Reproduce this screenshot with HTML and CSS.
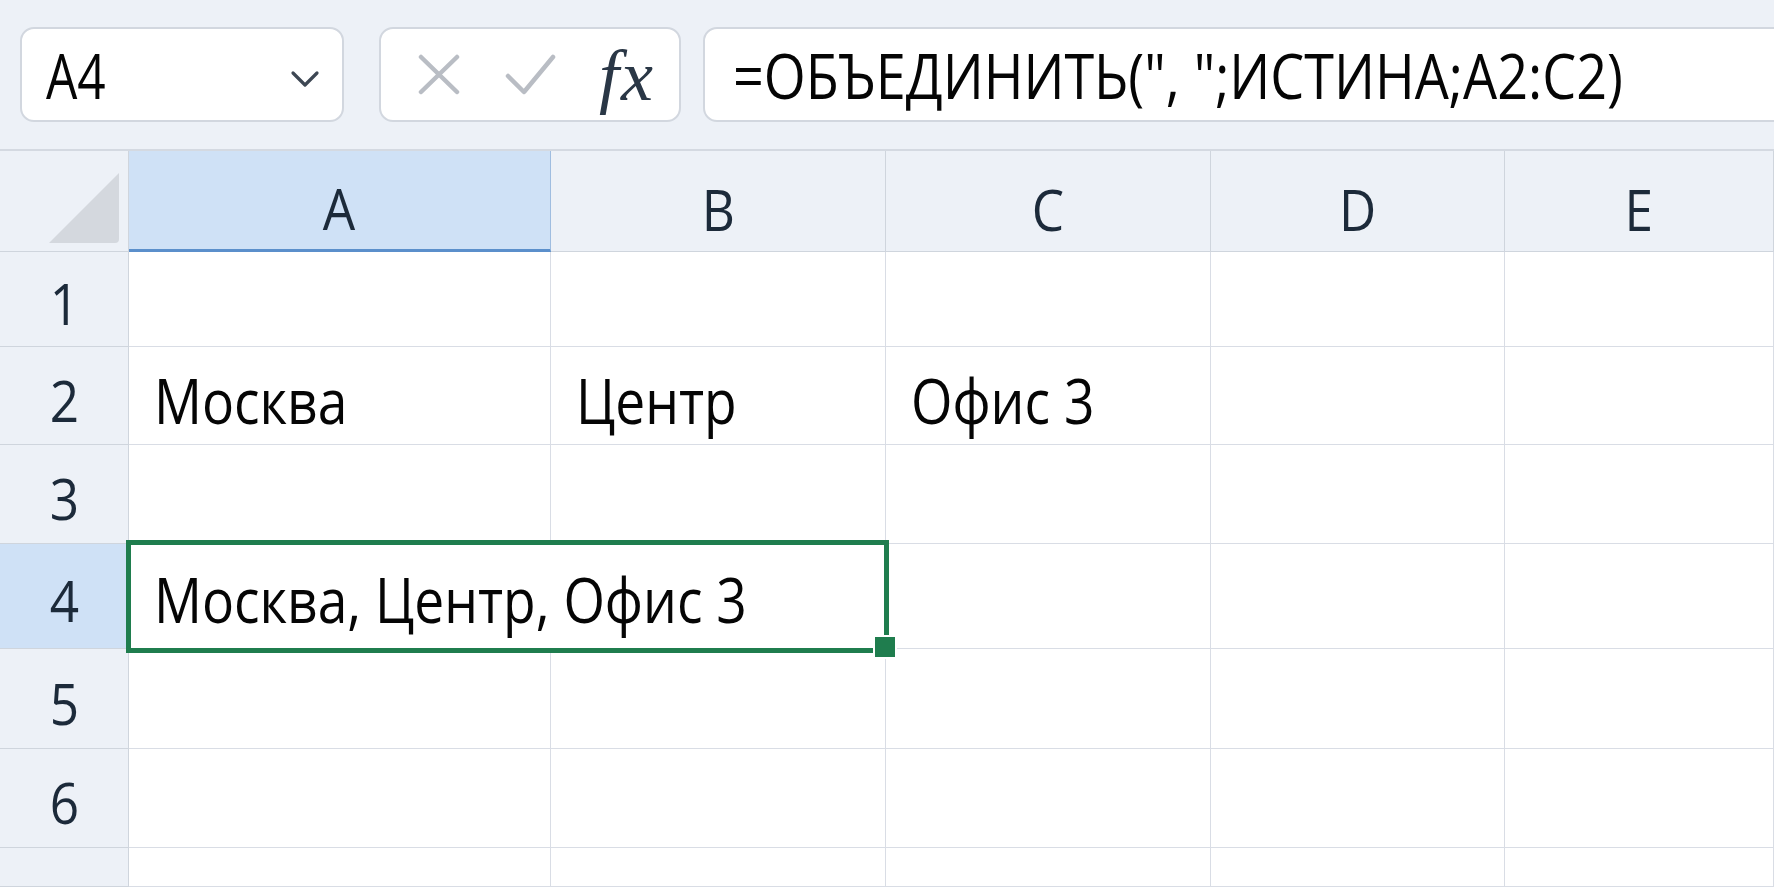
FILE: index.html
```html
<!DOCTYPE html>
<html lang="ru">
<head>
  <meta charset="UTF-8">
  <meta name="viewport" content="width=device-width, initial-scale=1.0">
  <title>Книга1</title>
  <link rel="stylesheet" href="styles.css">
</head>
<body>
  <div class="toolbar">
    <div class="name-box">
      <span class="narrow">A4</span>
      <svg class="chevron" width="30" height="18" viewBox="0 0 30 18">
        <polyline points="3,3 15,15 27,3" />
      </svg>
    </div>
    <div class="fx-box">
      <svg class="icon-cancel" width="42" height="41" viewBox="0 0 42 41">
        <line x1="3" y1="3" x2="39" y2="38" />
        <line x1="39" y1="3" x2="3" y2="38" />
      </svg>
      <svg class="icon-enter" width="51" height="41" viewBox="0 0 51 41">
        <polyline points="3,22 19,38 48,3" />
      </svg>
      <span class="fx">fx</span>
    </div>
    <div class="formula-bar"><span class="narrow">=ОБЪЕДИНИТЬ(", ";ИСТИНА;A2:C2)</span></div>
  </div>

  <div class="sheet">
    <div class="corner">
      <svg width="70" height="70" viewBox="0 0 70 70">
        <path d="M70 0 L70 66 Q70 70 66 70 L0 70 Z" />
      </svg>
    </div>
    <div class="col-head selected"><span class="narrow">A</span></div>
    <div class="col-head"><span class="narrow">B</span></div>
    <div class="col-head"><span class="narrow">C</span></div>
    <div class="col-head"><span class="narrow">D</span></div>
    <div class="col-head"><span class="narrow">E</span></div>

    <div class="row-head"><span class="narrow">1</span></div>
    <div class="cell"></div>
    <div class="cell"></div>
    <div class="cell"></div>
    <div class="cell"></div>
    <div class="cell"></div>

    <div class="row-head"><span class="narrow">2</span></div>
    <div class="cell"><span class="narrow">Москва</span></div>
    <div class="cell"><span class="narrow">Центр</span></div>
    <div class="cell"><span class="narrow">Офис 3</span></div>
    <div class="cell"></div>
    <div class="cell"></div>

    <div class="row-head"><span class="narrow">3</span></div>
    <div class="cell"></div>
    <div class="cell"></div>
    <div class="cell"></div>
    <div class="cell"></div>
    <div class="cell"></div>

    <div class="row-head selected"><span class="narrow">4</span></div>
    <div class="cell wide"><span class="narrow">Москва, Центр, Офис 3</span></div>
    <div class="cell"></div>
    <div class="cell"></div>
    <div class="cell"></div>

    <div class="row-head"><span class="narrow">5</span></div>
    <div class="cell"></div>
    <div class="cell"></div>
    <div class="cell"></div>
    <div class="cell"></div>
    <div class="cell"></div>

    <div class="row-head"><span class="narrow">6</span></div>
    <div class="cell"></div>
    <div class="cell"></div>
    <div class="cell"></div>
    <div class="cell"></div>
    <div class="cell"></div>

    <!-- last row is cut by the window, its number stays hidden -->
    <div class="row-head"></div>
    <div class="cell"></div>
    <div class="cell"></div>
    <div class="cell"></div>
    <div class="cell"></div>
    <div class="cell"></div>

    <!-- active cell frame + fill handle -->
    <div class="selection"></div>
    <div class="fill-handle"></div>
  </div>
</body>
</html>
```

FILE: styles.css
```css
* {
  box-sizing: border-box;
}
body {
  margin: 0;
  height: 887px;
  overflow: hidden;
  background: #fff;
  font-family: "Open Sans", "Noto Sans", sans-serif;
  color: #050505;
}

/* condensed look of the sheet font */
.narrow {
  display: inline-block;
  transform: scaleX(0.86);
  transform-origin: 0 50%;
}

/* formula bar */
.toolbar {
  height: 151px;
  background: #edf1f7;
  border-bottom: 2px solid #d4d9e1;
  display: flex;
  align-items: flex-start;
  padding: 27px 0 0 20px;
  white-space: nowrap;
}
.name-box,
.fx-box,
.formula-bar {
  height: 95px;
  background: #fff;
  border: 2px solid #d2d7df;
  border-radius: 14px;
  display: flex;
  align-items: center;
  flex-shrink: 0;
}
.name-box {
  width: 324px;
  padding: 0 22px 0 24px;
  justify-content: space-between;
  font-size: 62px;
}
.name-box .narrow {
  transform: scaleX(0.8);
}
.chevron {
  margin-top: 8px;
}
.chevron polyline {
  fill: none;
  stroke: #3d4753;
  stroke-width: 3.2;
  stroke-linecap: round;
  stroke-linejoin: round;
}
.fx-box {
  width: 302px;
  margin-left: 35px;
  padding-left: 37px;
}
.fx-box line,
.fx-box polyline {
  fill: none;
  stroke: #b9bdc4;
  stroke-width: 4.5;
  stroke-linecap: round;
  stroke-linejoin: round;
}
.icon-enter {
  margin-left: 45px;
}
.fx {
  margin-left: 43px;
  margin-top: 4px;
  font-family: "Liberation Serif", "DejaVu Serif", serif;
  font-style: italic;
  font-size: 72px;
  letter-spacing: 2px;
  color: #2a3746;
}
.formula-bar {
  width: 1120px;
  margin-left: 22px;
  padding-left: 28px;
  font-size: 62px;
  overflow: hidden;
}
.formula-bar .narrow {
  transform: scaleX(0.87);
}

/* grid */
.sheet {
  position: relative;
  display: grid;
  grid-template-columns: 129px 422px 335px 325px 294px 1fr;
  grid-template-rows: 101px 95px 98px 99px 105px 100px 99px 1fr;
  height: 736px;
}
.corner,
.col-head,
.row-head {
  background: #edf1f7;
  border-right: 1px solid #cfd5dd;
  border-bottom: 1px solid #cfd5dd;
  color: #1c2a3a;
  font-size: 57px;
}
.col-head .narrow,
.row-head .narrow {
  transform: scaleX(0.9);
  transform-origin: 50% 50%;
}
.corner {
  display: flex;
  justify-content: flex-end;
  align-items: flex-end;
  padding: 0 9px 8px 0;
}
.corner path {
  fill: #d4d8de;
}
.col-head {
  display: flex;
  justify-content: center;
  align-items: center;
  padding-top: 16px;
}
.col-head.selected {
  background: #cfe1f6;
  border-right-color: #9fbde0;
  border-bottom: 3px solid #5b8fcb;
}
.row-head {
  display: flex;
  justify-content: center;
  align-items: center;
  padding-top: 8px;
}
.row-head.selected {
  background: #cfe1f6;
}
.cell {
  border-right: 1px solid #d9dde5;
  border-bottom: 1px solid #d9dde5;
  display: flex;
  align-items: center;
  padding: 8px 0 0 25px;
  font-size: 62px;
  white-space: nowrap;
}
.cell.wide {
  grid-column: span 2;
  padding-top: 6px;
}

.selection {
  position: absolute;
  left: 126px;
  top: 389px;
  width: 763px;
  height: 113px;
  border: 5px solid #1f7d4e;
}
.fill-handle {
  position: absolute;
  left: 873px;
  top: 484px;
  width: 24px;
  height: 24px;
  background: #1f7d4e;
  border: 2px solid #fff;
}
```
